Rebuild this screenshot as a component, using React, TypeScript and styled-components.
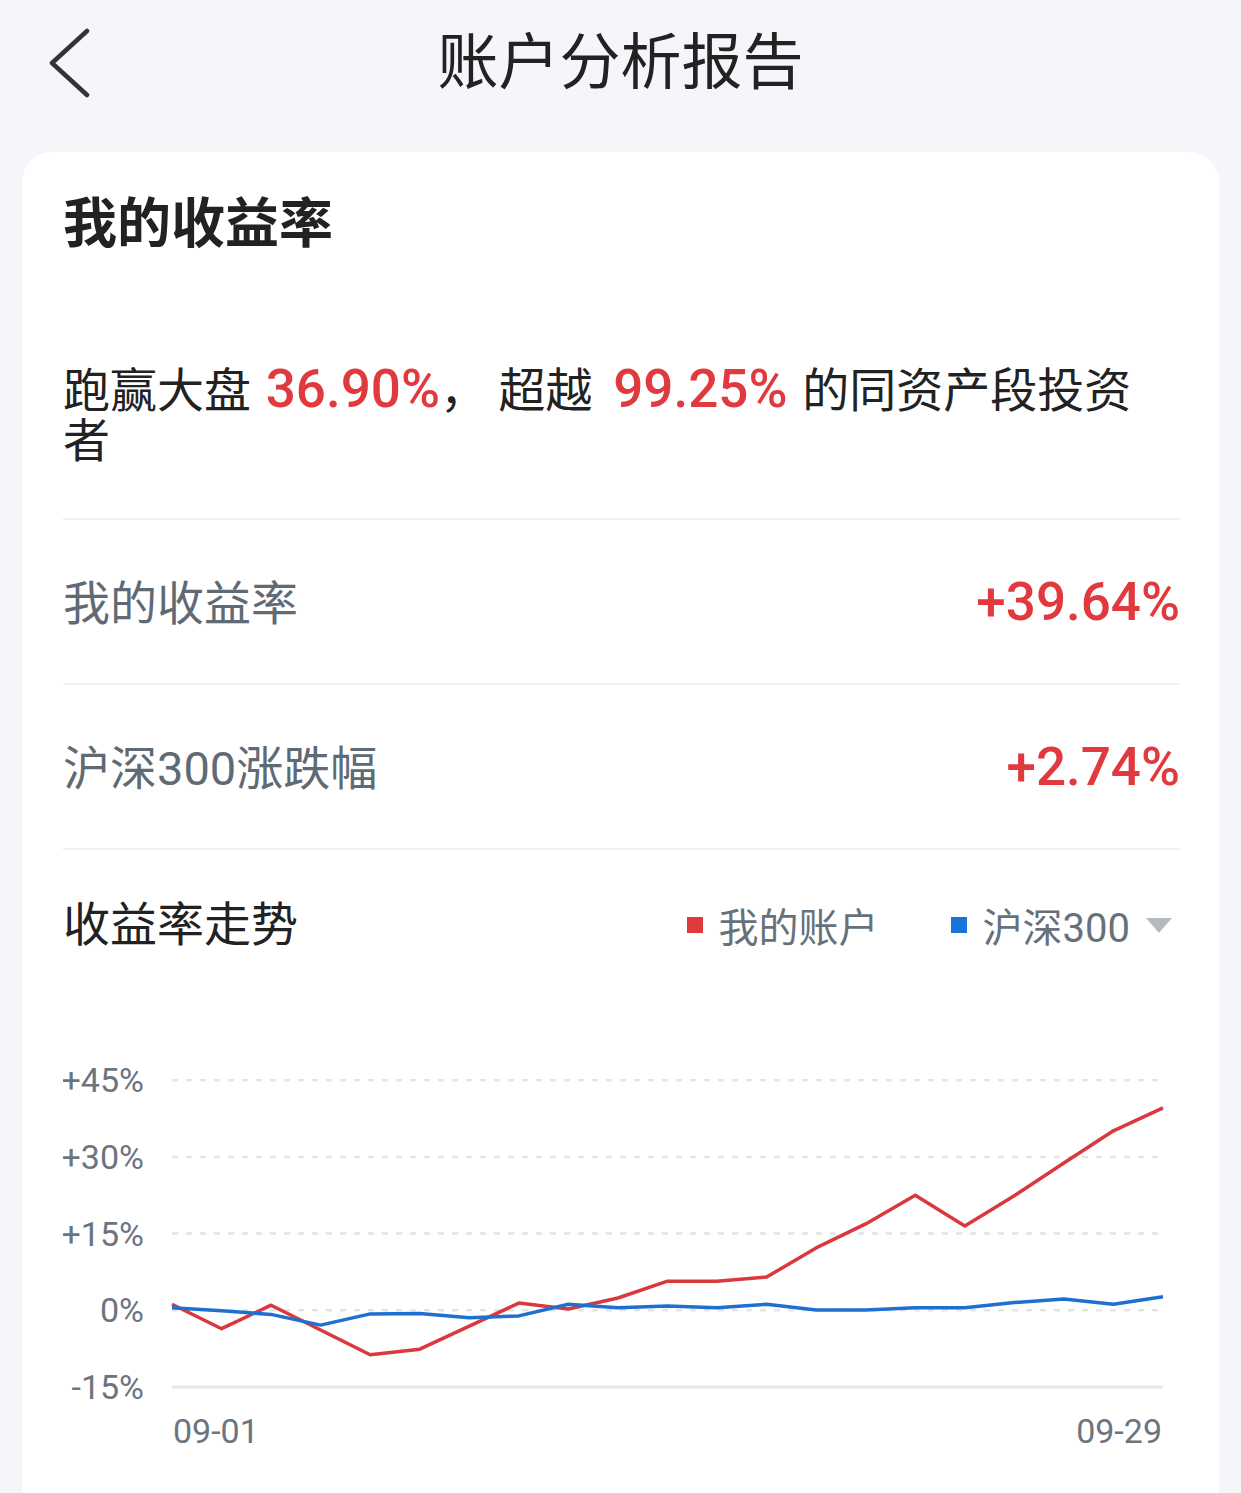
import styled, { createGlobalStyle } from 'styled-components';

const GlobalStyle = createGlobalStyle`
  body {
    margin: 0;
    background: #f5f6fa;
    font-family: Roboto, "Noto Sans CJK SC", sans-serif;
  }
`;

const Page = styled.div`
  width: 1241px;
  min-height: 1493px;
  overflow: hidden;
`;

const Header = styled.header`
  height: 126px;
  display: grid;
  grid-template-columns: 1fr auto 1fr;
  align-items: center;
`;

const BackButton = styled.button`
  justify-self: start;
  margin-left: 47px;
  padding: 0;
  border: none;
  background: none;
  display: flex;
  cursor: pointer;
`;

const Title = styled.h1`
  margin: 0;
  font-size: 61px;
  font-weight: 400;
  line-height: 61px;
  color: #222;
`;

const Card = styled.main`
  margin: 26px 22px 0;
  background: #fff;
  border-radius: 30px 30px 0 0;
  padding: 46px 39px 200px 41px;
`;

const CardTitle = styled.h2`
  margin: 0;
  font-size: 54px;
  font-weight: 700;
  line-height: 54px;
  color: #222;
`;

const Summary = styled.p`
  margin: 112px 0 52px;
  max-width: 1080px;
  font-size: 47px;
  line-height: 50px;
  color: #222;
`;

const Red = styled.span<{ $before: number; $after: number }>`
  margin-left: ${({ $before }) => $before}px;
  margin-right: ${({ $after }) => $after}px;
  font-size: 53px;
  font-weight: 500;
  color: #e0393e;
`;

const StatRow = styled.div`
  display: flex;
  align-items: center;
  justify-content: space-between;
  height: 163px;
  border-top: 2px solid #f0f1f3;
`;

const StatLabel = styled.span`
  margin-top: -4px;
  font-size: 47px;
  color: #5f6a74;
`;

const StatValue = styled.span`
  font-size: 53px;
  font-weight: 500;
  color: #e0393e;
`;

const ChartSection = styled.section`
  border-top: 2px solid #f0f1f3;
`;

const ChartHeader = styled.div`
  display: flex;
  align-items: center;
  justify-content: space-between;
  padding-top: 52px;
  height: 46px;
`;

const ChartTitle = styled.h3`
  margin: 0;
  font-size: 47px;
  font-weight: 400;
  line-height: 46px;
  color: #222;
`;

const Legend = styled.div`
  display: flex;
  align-items: center;
  margin-right: 8px;
  font-size: 40px;
  color: #67717b;
`;

const LegendItem = styled.div`
  display: flex;
  align-items: center;
  & + & {
    margin-left: 72px;
  }
`;

const Swatch = styled.i<{ $color: string }>`
  width: 16px;
  height: 16px;
  margin-right: 16px;
  background: ${({ $color }) => $color};
`;

const Caret = styled.svg`
  margin-left: 16px;
`;

const ChartSvg = styled.svg`
  display: block;
  margin-top: 53px;
`;

const red = [1.2, -3.6, 1.0, -3.85, -8.7, -7.6, -3.1, 1.4, 0.25, 2.4, 5.7, 5.7, 6.5, 12.2, 16.9, 22.5, 16.5, 22.4, 28.8, 35.1, 39.6];
const blue = [0.5, -0.1, -0.8, -2.9, -0.7, -0.65, -1.45, -1.1, 1.2, 0.5, 0.85, 0.5, 1.2, 0.05, 0.05, 0.5, 0.5, 1.5, 2.2, 1.2, 2.66];

const ZERO_Y = 309.3;
const STEP = 76.7 / 15;
const X0 = 109;
const DX = 991 / 20;

const toPoints = (data: number[]) =>
  data.map((v, i) => `${(X0 + i * DX).toFixed(1)},${(ZERO_Y - v * STEP).toFixed(1)}`).join(' ');

const ticks = [45, 30, 15, 0, -15];

const TrendChart = () => (
  <ChartSvg width={1117} height={460} viewBox="0 0 1117 460">
    {ticks.map((t) => {
      const y = ZERO_Y - t * STEP;
      return (
        <g key={t}>
          <line
            x1={X0}
            x2={t === -15 ? 1100 : 1097}
            y1={y}
            y2={y}
            stroke={t === -15 ? '#e8e9eb' : '#e4e5e7'}
            strokeWidth={t === -15 ? 3 : 2.5}
            strokeDasharray={t === -15 ? undefined : '6 8'}
          />
          <text x={81} y={y} textAnchor="end" dominantBaseline="central" fontSize={34} fill="#6b757f">
            {t > 0 ? `+${t}%` : `${t}%`}
          </text>
        </g>
      );
    })}
    <polyline points={toPoints(red)} fill="none" stroke="#d9393c" strokeWidth={3.5} strokeLinejoin="round" />
    <polyline points={toPoints(blue)} fill="none" stroke="#1f6fd1" strokeWidth={3.5} strokeLinejoin="round" />
    <text x={110} y={430} dominantBaseline="central" fontSize={34} fill="#6b757f">09-01</text>
    <text x={1099} y={430} textAnchor="end" dominantBaseline="central" fontSize={34} fill="#6b757f">09-29</text>
  </ChartSvg>
);

const App = () => (
  <Page>
    <GlobalStyle />
    <Header>
      <BackButton aria-label="返回">
        <svg width="46" height="70" viewBox="0 0 46 70">
          <polyline points="40,3 5,35 40,67" fill="none" stroke="#333" strokeWidth={4.5} strokeLinecap="round" strokeLinejoin="round" />
        </svg>
      </BackButton>
      <Title>账户分析报告</Title>
    </Header>
    <Card>
      <CardTitle>我的收益率</CardTitle>
      <Summary>
        跑赢大盘 <Red $before={3} $after={0}>36.90%</Red>， 超越 <Red $before={9} $after={3}>99.25%</Red> 的同资产段投资者
      </Summary>
      <StatRow>
        <StatLabel>我的收益率</StatLabel>
        <StatValue>+39.64%</StatValue>
      </StatRow>
      <StatRow>
        <StatLabel>沪深300涨跌幅</StatLabel>
        <StatValue>+2.74%</StatValue>
      </StatRow>
      <ChartSection>
        <ChartHeader>
          <ChartTitle>收益率走势</ChartTitle>
          <Legend>
            <LegendItem>
              <Swatch $color="#e0393e" />
              我的账户
            </LegendItem>
            <LegendItem>
              <Swatch $color="#1a73d9" />
              沪深300
              <Caret width="26" height="15" viewBox="0 0 26 15">
                <polygon points="0,0 26,0 13,15" fill="#b6babe" />
              </Caret>
            </LegendItem>
          </Legend>
        </ChartHeader>
        <TrendChart />
      </ChartSection>
    </Card>
  </Page>
);

export default App;
